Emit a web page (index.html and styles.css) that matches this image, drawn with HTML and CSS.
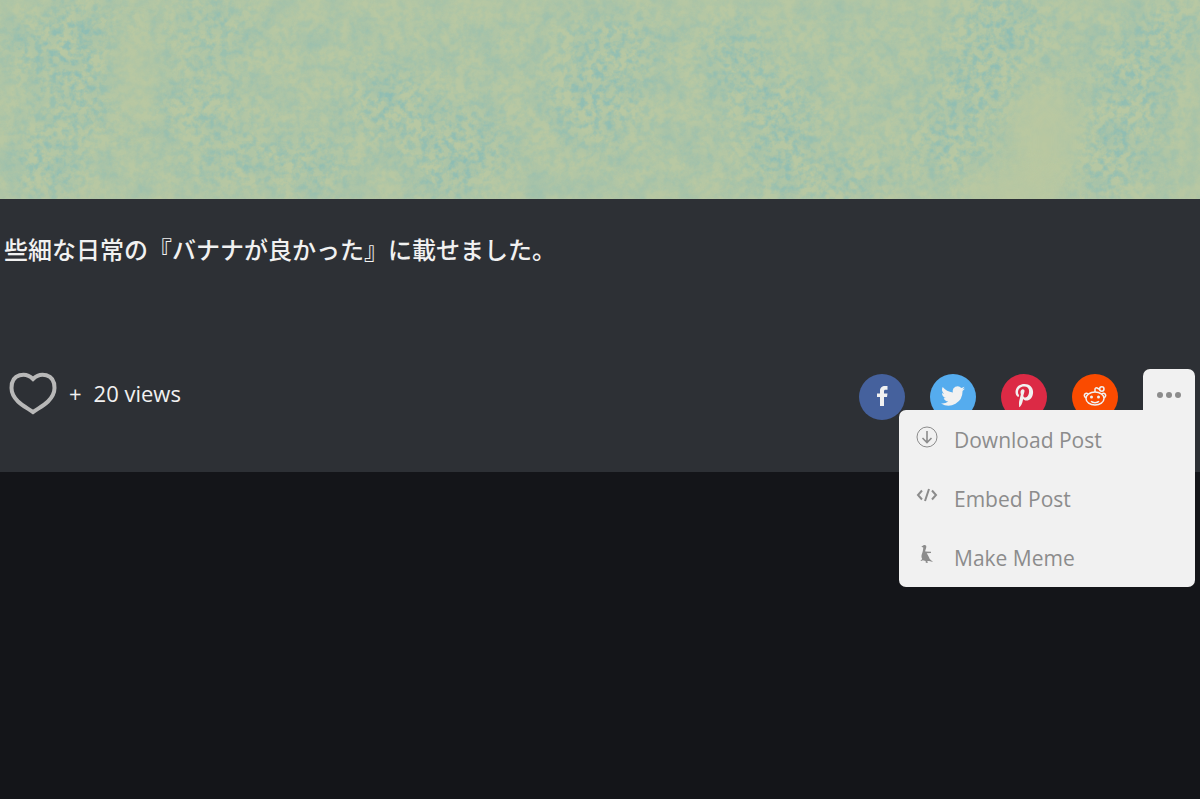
FILE: index.html
```
<!DOCTYPE html>
<html lang="ja">
<head>
  <meta charset="UTF-8">
  <meta name="viewport" content="width=device-width, initial-scale=1.0">
  <title>Post</title>
  <link rel="stylesheet" href="styles.css">
</head>
<body>
  <svg class="artwork" viewBox="0 0 1200 199" preserveAspectRatio="xMidYMid slice" aria-hidden="true">
    <defs>
      <filter id="speckle" x="0" y="0" width="1200" height="199" filterUnits="userSpaceOnUse" color-interpolation-filters="sRGB">
        <feGaussianBlur in="SourceGraphic" stdDeviation="18" result="patches"/>
        <feTurbulence type="fractalNoise" baseFrequency="0.14" numOctaves="3" seed="8"/>
        <feColorMatrix values="0 0 0 0 0.47  0 0 0 0 0.72  0 0 0 0 0.74  2.8 0 0 0 -1.1" result="grain"/>
        <feComposite in="grain" in2="patches" operator="in"/>
      </filter>
      <filter id="paper" x="0" y="0" width="1200" height="199" filterUnits="userSpaceOnUse" color-interpolation-filters="sRGB">
        <feTurbulence type="fractalNoise" baseFrequency="0.04" numOctaves="5" seed="3"/>
        <feColorMatrix values="0 0 0 0 0.58  0 0 0 0 0.74  0 0 0 0 0.69  2 0 0 0 -0.7"/>
      </filter>
    </defs>
    <rect width="1200" height="199" fill="#b8c8a3"/>
    <rect width="1200" height="199" filter="url(#paper)" opacity=".5"/>
    <g filter="url(#speckle)">
      <rect width="1200" height="199" opacity=".22"/>
      <g opacity=".5">
        <ellipse cx="80" cy="20" rx="32" ry="24"/>
        <ellipse cx="45" cy="48" rx="50" ry="20"/>
        <ellipse cx="80" cy="88" rx="34" ry="44"/>
        <ellipse cx="48" cy="165" rx="32" ry="36"/>
        <ellipse cx="210" cy="8" rx="36" ry="13"/>
        <ellipse cx="215" cy="45" rx="34" ry="14"/>
        <ellipse cx="200" cy="106" rx="38" ry="20"/>
        <ellipse cx="255" cy="158" rx="40" ry="18"/>
        <ellipse cx="205" cy="165" rx="14" ry="18"/>
        <ellipse cx="315" cy="168" rx="28" ry="26"/>
        <ellipse cx="390" cy="105" rx="35" ry="34"/>
        <ellipse cx="460" cy="145" rx="46" ry="34"/>
        <ellipse cx="445" cy="184" rx="36" ry="18"/>
        <ellipse cx="612" cy="48" rx="48" ry="28"/>
        <ellipse cx="595" cy="105" rx="42" ry="36"/>
        <ellipse cx="738" cy="64" rx="26" ry="38"/>
        <ellipse cx="780" cy="115" rx="36" ry="34"/>
        <ellipse cx="780" cy="172" rx="28" ry="26"/>
        <ellipse cx="840" cy="184" rx="54" ry="18"/>
        <ellipse cx="1000" cy="22" rx="44" ry="32"/>
        <ellipse cx="980" cy="80" rx="36" ry="36"/>
        <ellipse cx="950" cy="142" rx="32" ry="32"/>
        <ellipse cx="1136" cy="82" rx="34" ry="46"/>
        <ellipse cx="1110" cy="160" rx="34" ry="38"/>
        <ellipse cx="1176" cy="26" rx="32" ry="24"/>
      </g>
    </g>
    <ellipse class="glow" cx="1045" cy="142" rx="36" ry="58"/>
    <ellipse class="glow" cx="1010" cy="190" rx="44" ry="22"/>
    <ellipse class="glow faint" cx="132" cy="75" rx="26" ry="44"/>
  </svg>

  <main class="post">
    <p class="description">些細な日常の『バナナが良かった』に載せました。</p>

    <div class="toolbar">
      <div class="stats">
        <button class="like" type="button" aria-label="Like">
          <svg viewBox="0 0 48 44">
            <path d="M24 8C17 1 2.500 2 2.500 17c0 6 2.500 9.500 6.500 13.500 4 4 10 7 15 10.500 5-3.500 11-6.500 15-10.500 4-4 6.500-7.500 6.500-13.500C45.500 2 31 1 24 8z"/>
          </svg>
        </button>
        <span class="plus">+</span>
        <span>20 views</span>
      </div>

      <div class="share">
        <a class="circle facebook" href="#" aria-label="Facebook">
          <svg viewBox="0 0 24 24"><path d="M10 22V13H7V9.500h3V7c0-3.500 2-5 5-5h2.500v3.700H15.600c-1.200 0-1.600.5-1.600 1.600v2.200h3.500L17 13h-3v9z"/></svg>
        </a>
        <a class="circle twitter" href="#" aria-label="Twitter">
          <svg viewBox="0 0 24 24"><path d="M24 4.600c-.9.400-1.800.7-2.800.8 1-.6 1.800-1.600 2.200-2.700-1 .6-2 1-3.100 1.200a4.900 4.900 0 0 0-8.400 4.500C7.700 8.100 4.100 6.100 1.700 3.100a4.900 4.900 0 0 0 1.500 6.600c-.8 0-1.600-.3-2.200-.6v.1c0 2.300 1.700 4.300 3.900 4.800-.7.200-1.500.2-2.200.1.600 2 2.400 3.400 4.600 3.400A9.900 9.900 0 0 1 0 19.500 14 14 0 0 0 21.500 7.100c1-.7 1.800-1.600 2.500-2.500z"/></svg>
        </a>
        <a class="circle pinterest" href="#" aria-label="Pinterest">
          <svg viewBox="0 0 24 24"><path d="M12.500 0C6.500 0 3.500 4.200 3.500 8c0 2.200.9 4.100 2.600 4.900.3.100.5 0 .6-.3l.3-1.100c.1-.3 0-.4-.2-.7-.5-.6-.8-1.400-.8-2.500 0-3.200 2.400-5.800 6.100-5.800 3.200 0 5 2 5 4.600 0 3.500-1.500 6.500-3.800 6.500-1.300 0-2.200-1-1.900-2.300.4-1.500 1.100-3.200 1.100-4.300 0-1-.6-1.800-1.700-1.800-1.300 0-2.300 1.300-2.300 3.100 0 1.100.4 1.900.4 1.900L7.200 17c-.4 1.900-.1 5.200 0 6.200 1 0 2.700-3 3.200-4.900l.8-3.200c.5.8 1.700 1.500 3 1.500 4 0 6.900-3.700 6.900-8.700C21.100 3.400 17.600 0 12.500 0z"/></svg>
        </a>
        <a class="circle reddit" href="#" aria-label="Reddit">
          <svg viewBox="0 0 24 24">
            <g fill="none" stroke="#f1f1f1" stroke-width="1.500">
              <ellipse cx="12" cy="14.500" rx="9" ry="6.500"/>
              <path d="M5 10c-1.500-1.500-3.700-.5-3.700 1.500 0 1 .7 1.900 1.700 2.200M19 10c1.500-1.500 3.700-.5 3.700 1.500 0 1-.7 1.900-1.700 2.200M12 8V5.500c0-1.500 1-2 2-1.500l3 1.500M8 17.300c2 1.800 6 1.800 8 0"/>
              <circle cx="18.800" cy="5" r="2.200"/>
            </g>
            <circle cx="8.500" cy="13" r="1.500"/>
            <circle cx="15.500" cy="13" r="1.500"/>
          </svg>
        </a>
        <div class="more">
          <button class="more-btn" type="button" aria-label="More" aria-expanded="true">
            <svg viewBox="0 0 26 8"><circle cx="4" cy="4" r="3"/><circle cx="13" cy="4" r="3"/><circle cx="22" cy="4" r="3"/></svg>
          </button>
          <div class="menu">
            <button class="menu-item" type="button">
              <svg viewBox="0 0 22 22"><circle cx="11" cy="11" r="10"/><path stroke-width="1.600" d="M11 5v11.500M6.500 12l4.500 4.500 4.500-4.500"/></svg>
              Download Post
            </button>
            <button class="menu-item" type="button">
              <svg class="thick" viewBox="0 0 22 22"><path d="M6 5.500L2 10l4 4.500M16 5.500l4 4.500-4 4.500M13 4L9 16"/></svg>
              Embed Post
            </button>
            <button class="menu-item" type="button">
              <svg class="solid" viewBox="0 0 22 22"><path d="M5.300 2.700L7.500 1.200c1.600-.6 3 .1 2.800 1.700C10.200 4.700 9 6 9.300 7.500l5.700.3v1.100l-4.300.4c1 1.500 2.400 3.700 3 5.800l3.400 2.800-4-1-1.800.2.500 1.900-2-.3-.2-1.700-2.700-.7-1.700.8H4.400l1.800-2C5.300 13.500 5.300 11.500 6 9.800 6.600 8 7.200 6 7.300 3.500z"/></svg>
              Make Meme
            </button>
          </div>
        </div>
      </div>
    </div>
  </main>
</body>
</html>
```
FILE: styles.css
```
* {
  box-sizing: border-box;
}

body {
  margin: 0;
  min-height: 100vh;
  background-color: #141519;
  color: #f1f1f1;
  font-family: 'Open Sans', 'Noto Sans CJK JP', sans-serif;
}

button {
  border: none;
  background: none;
  padding: 0;
  font: inherit;
  cursor: pointer;
}

svg {
  display: block;
}

.artwork {
  width: 100%;
  height: 199px;
}

.glow {
  fill: #bac8a1;
  opacity: 0.8;
  filter: blur(12px);
}

.glow.faint {
  opacity: 0.5;
}

.post {
  background-color: #2d3035;
  padding: 33px 4px 51px;
}

.description {
  margin: 0 0 101px;
  font-size: 24px;
  font-weight: 500;
  line-height: 36px;
}

.toolbar {
  display: flex;
  justify-content: space-between;
  align-items: flex-start;
  padding-right: 1px;
}

.stats {
  display: flex;
  align-items: center;
  height: 48px;
  padding-left: 5px;
  font-size: 22px;
}

.like svg {
  width: 48px;
  height: 44px;
  fill: none;
  stroke: #b8b8b8;
  stroke-width: 4;
}

.plus {
  margin: 0 12px;
}

.share {
  display: flex;
  align-items: flex-start;
  gap: 25px;
}

.circle {
  display: flex;
  align-items: center;
  justify-content: center;
  width: 46px;
  height: 46px;
  margin-top: 5px;
  padding-bottom: 2px;
  border-radius: 50%;
}

.circle svg {
  width: 24px;
  height: 24px;
  fill: #f1f1f1;
}

.facebook {
  background-color: #45619d;
}

.twitter {
  background-color: #55acee;
}

.pinterest {
  background-color: #dc2a45;
}

.reddit {
  background-color: #fa4b00;
}

.more {
  position: relative;
}

.more-btn {
  display: flex;
  align-items: center;
  justify-content: center;
  width: 52px;
  height: 52px;
  border-radius: 7px 7px 0 0;
  background-color: #f1f1f1;
}

.more-btn svg {
  width: 26px;
  height: 8px;
  fill: #8c8c8c;
}

.menu {
  position: absolute;
  top: 41px;
  right: 0;
  width: 296px;
  border-radius: 7px 0 7px 7px;
  background-color: #f1f1f1;
}

.menu-item {
  display: flex;
  align-items: center;
  gap: 16px;
  width: 100%;
  height: 59px;
  padding: 1px 17px 0;
  color: #8c8c8c;
  font-size: 21px;
}

.menu-item svg {
  width: 22px;
  height: 22px;
  margin-bottom: 6px;
  fill: none;
  stroke: #8c8c8c;
  stroke-width: 1;
}

.menu-item .thick {
  stroke-width: 2;
}

.menu-item .solid {
  fill: #8c8c8c;
  stroke: none;
}
```
